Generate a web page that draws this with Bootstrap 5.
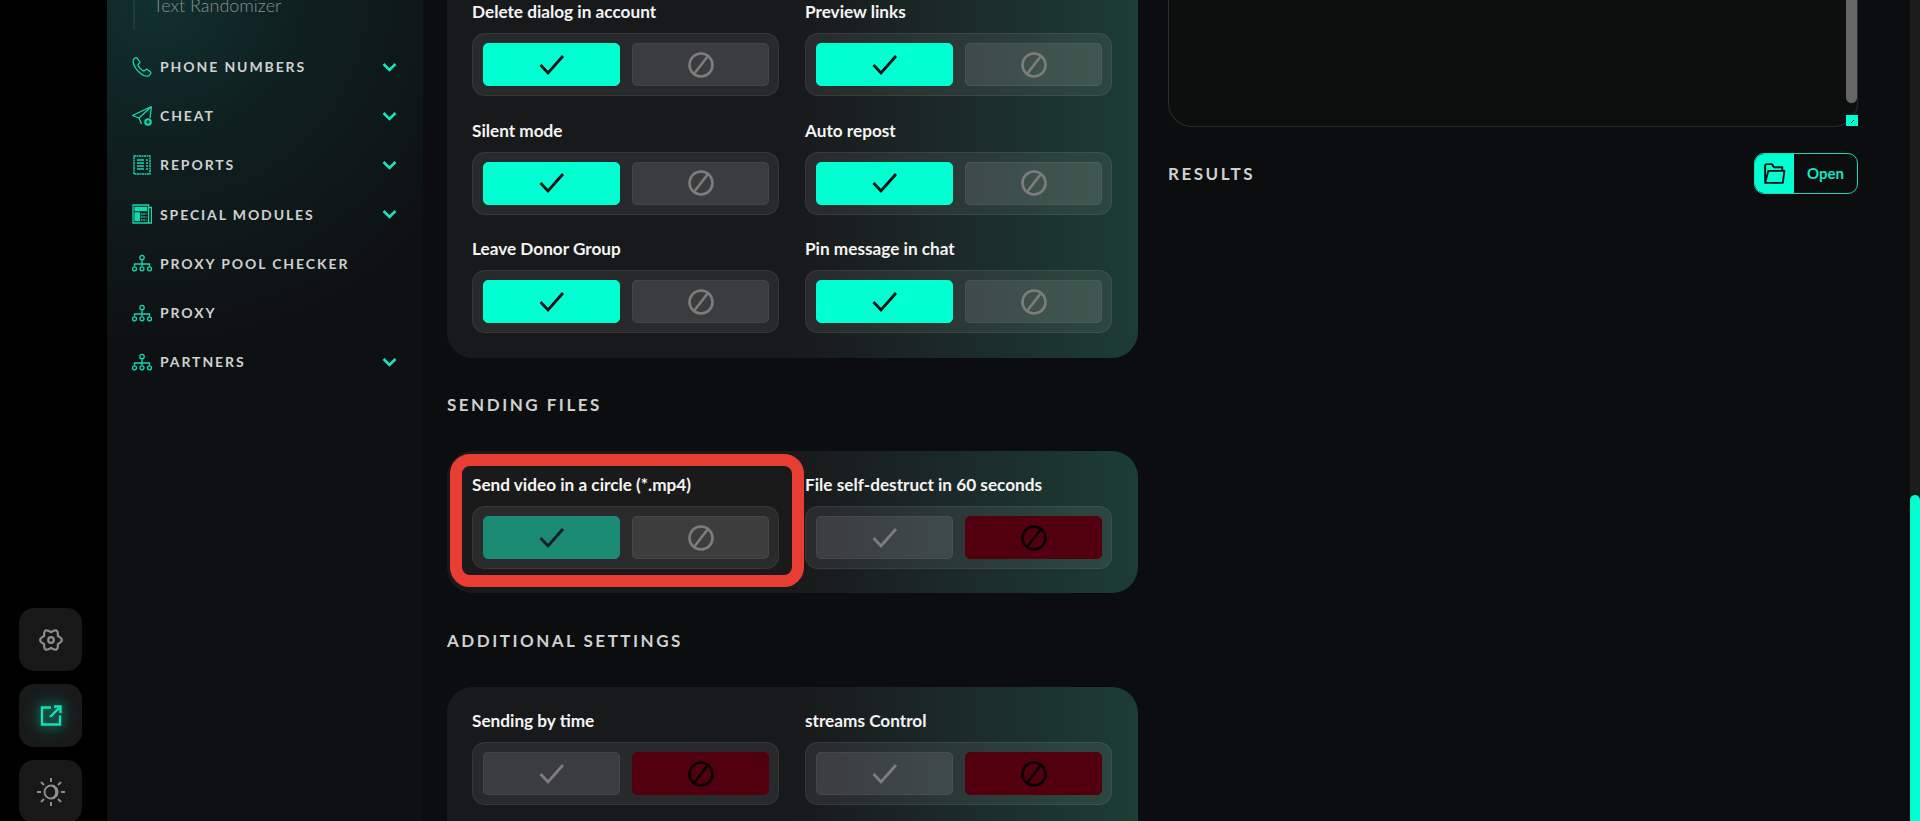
<!DOCTYPE html>
<html lang="en">
<head>
  <meta charset="UTF-8" />
  <title>Settings</title>
  <link href="https://cdn.jsdelivr.net/npm/bootstrap@5.3.0/dist/css/bootstrap.min.css" rel="stylesheet">
  <style>
    html, body { height: 821px; overflow: hidden; }
    body { background: #0c0d0f; font-family: "Lato", "Liberation Sans", sans-serif; color: #f2f2f2; }
    .app-shell { height: 821px; overflow: hidden; }

    .rail { width: 107px; flex: none; background: #000; padding: 0 25px 0 19px; margin-bottom: -2px; gap: 13px; }
    .rail-btn { width: 63px; height: 63px; border-radius: 15px; background: #181818; color: #8d8d8d; flex: none; }
    .rail-btn.is-active { background: radial-gradient(circle, #123a32 0, #181a1a 62%); color: #15e0b8; }
    .rail-btn.is-active svg { filter: drop-shadow(0 0 4px rgba(21, 224, 184, .55)); }

    .side { width: 316px; flex: none; background: radial-gradient(ellipse 360px 340px at 15% 0, #10302e 0, #0f1e1f 45%, #0e1113 100%); background-color: #0e1011; padding: 0 26px 0 25px; }
    .side-sub { height: 30px; margin-left: 1px; margin-bottom: 12px; border-left: 2px solid #1f3a3a; padding-left: 18px; color: #8b9090; font-size: 18px; line-height: 10px; font-weight: 300; white-space: nowrap; }
    .side-item { height: 49.2px; color: #cfd1d1; font-size: 14px; font-weight: 700; letter-spacing: 1.9px; text-transform: uppercase; white-space: nowrap; }
    .side-icon { width: 20px; height: 20px; flex: none; color: #14d9b0; margin-right: 8px; }
    .side-chev { width: 15px; height: 10px; color: #14e8bc; margin-left: auto; flex: none; }

    .main-col { width: 715px; flex: none; padding-left: 24px; }
    .sect-title { color: #cfd1d1; font-size: 17px; font-weight: 700; letter-spacing: 2.5px; text-transform: uppercase; line-height: 20px; }
    .opt-panel { width: 691px; border-radius: 26px; background: linear-gradient(90deg, #18191b 0, #18191b 50%, #1b2b29 75%, #1c3d33 100%); padding: 0 25px; }
    .opt-grid { display: grid; grid-template-columns: 307px 307px; column-gap: 26px; }
    .opt-label { font-size: 17.2px; font-weight: 700; line-height: 20px; color: #f4f4f4; margin-bottom: 11px; white-space: nowrap; }
    .opt-group { height: 63px; border-radius: 13px; padding: 9px 9px 9px 10px; gap: 12px; background: rgba(255, 255, 255, .07); border: 1px solid rgba(255, 255, 255, .07); }
    .opt-btn { flex: 1 1 0; height: 43px; border-radius: 5px; background: rgba(255, 255, 255, .09); border: 1px solid rgba(255, 255, 255, .05); color: #7d7d7d; }
    .opt-btn.is-on { background: #00ffd1; border-color: #00ffd1; color: #0a0f12; }
    .opt-btn.is-off { background: #520010; border-color: #520010; color: #0a0003; }
    .opt-btn.tip-on { background: #1a8a73; border-color: #1a8a73; color: #0f1a22; }
    .opt-btn svg { width: 26px; height: 26px; }

    .panel-a { height: 358px; padding-top: 2px; border-radius: 0 0 26px 26px; }
    .panel-a .opt-grid { row-gap: 24.5px; }
    .panel-b { height: 142px; padding-top: 24px; }
    .panel-c { height: 170px; padding-top: 24px; }
    .title-files { margin-top: 37px; margin-bottom: 36px; }
    .title-extra { margin-top: 38px; margin-bottom: 36px; }

    .tip-box { position: absolute; z-index: 2; left: 3px; top: 3px; width: 354px; height: 133px; border: 12px solid #e83d33; border-radius: 20px; background: #1a1a1a; padding: 9px 0 0 10px; }
    .tip-box .opt-group { width: 307px; }

    .result-col { width: 690px; flex: none; margin-left: 30px; }
    .log-box { height: 127px; border: 1px solid #2a2d2c; border-top: 0; border-radius: 0 0 24px 24px; background: #0d0f0e; }
    .log-thumb { position: absolute; right: 0; top: 0; width: 11px; height: 103px; background: #666; border-radius: 0 0 6px 6px; }
    .log-grip { position: absolute; right: -1px; bottom: 0; width: 12px; height: 11px; background: #00ffd1; }
    .log-grip svg { display: block; }
    .result-head { margin-top: 26px; }
    .open-btn { width: 104px; height: 41px; border-radius: 10px; border: 1px solid #15d9b4; color: #18e6bf; font-size: 15px; font-weight: 700; overflow: hidden; padding: 0; background: transparent; }
    .open-ico { width: 39px; background: #00ffd1; color: #0a0f12; }

    .page-bar { position: absolute; right: 0; top: 0; bottom: 0; width: 10px; background: #1c1c1c; }
    .page-thumb { position: absolute; right: 0; top: 495px; bottom: 0; width: 10px; background: #00ffd1; border-radius: 5px 5px 0 0; }
  </style>
</head>
<body>
  <div class="app-shell d-flex position-relative">

    <div class="rail d-flex flex-column justify-content-end">
      <div class="rail-btn d-flex align-items-center justify-content-center">
        <svg width="28" height="28" viewBox="-2 -2 30 30" fill="none" stroke="currentColor" stroke-width="2.4" stroke-linejoin="round"><path d="M13 4.500Q21 -.86 20.360 8.750Q29 13 20.360 17.250Q21 26.860 13 21.500Q5 26.860 5.640 17.250Q-3 13 5.640 8.750Q5 -.86 13 4.500z"/><circle cx="13" cy="13" r="3"/></svg>
      </div>
      <div class="rail-btn is-active d-flex align-items-center justify-content-center">
        <svg width="24" height="24" viewBox="0 0 24 24" fill="none" stroke="currentColor" stroke-width="2.4"><path d="M12 3.500H3v17h18v-9"/><path d="M11 13l9-9M15 2.500h6.500V9"/></svg>
      </div>
      <div class="rail-btn d-flex align-items-center justify-content-center">
        <svg width="28" height="28" viewBox="0 0 28 28" fill="none" stroke="currentColor" stroke-width="2"><circle cx="14" cy="14" r="6.500"/><path d="M14 0v4M14 24v4M0 14h4M24 14h4M4 4l3 3M21 21l3 3M4 24l3-3M21 7l3-3"/><path d="M15 7.600a6.500 6.500 0 0 1 0 12.800 7 7 0 0 0 0-12.800z" fill="currentColor"/></svg>
      </div>
    </div>

    <div class="side">
      <div class="side-sub">Text Randomizer</div>
      <div class="side-item d-flex align-items-center">
        <svg class="side-icon" viewBox="0 0 20 20" fill="none" stroke="currentColor" stroke-width="1.3" stroke-linejoin="round"><path d="M1.500 2.500C2.500.8 4.500.3 5.300 1.300L7.800 5c.4 1-1.800 2-1.800 3 .6 2.200 3.800 5.500 6 6 1 .1 1.800-2 2.900-1.800l3.500 2.500c1 1-.4 4.300-3 4.500C8.500 19.500-.3 8.500 1.500 2.500z"/></svg>
        Phone numbers
        <svg class="side-chev" viewBox="0 0 15 10" fill="none" stroke="currentColor" stroke-width="2.5"><path d="M1.500 2l6 6 6-6"/></svg>
      </div>
      <div class="side-item d-flex align-items-center">
        <svg class="side-icon" viewBox="0 0 20 20" fill="none" stroke="currentColor" stroke-width="1.3" stroke-linejoin="round"><path d="M19.500 .5L.5 9.500l6.500 2.500 2.500 6M19.500 .5L7 12M19.500 .5L18 12"/><circle cx="16" cy="16" r="3.800" fill="currentColor" stroke="none"/><path d="M16 14v4M14 16h4" stroke="#0e1c1e" stroke-width="1.2"/></svg>
        Cheat
        <svg class="side-chev" viewBox="0 0 15 10" fill="none" stroke="currentColor" stroke-width="2.5"><path d="M1.500 2l6 6 6-6"/></svg>
      </div>
      <div class="side-item d-flex align-items-center">
        <svg class="side-icon" viewBox="0 0 20 20" fill="none" stroke="currentColor" stroke-width="1.4"><path d="M2 1h16v18H2z" stroke-dasharray="2 .5"/><path d="M5 5h7M5 8h7M5 11h7M5 14h7M14 5h2M14 8h2M14 11h2M14 14h2" stroke-width="1.5"/></svg>
        Reports
        <svg class="side-chev" viewBox="0 0 15 10" fill="none" stroke="currentColor" stroke-width="2.5"><path d="M1.500 2l6 6 6-6"/></svg>
      </div>
      <div class="side-item d-flex align-items-center">
        <svg class="side-icon" viewBox="0 0 20 20" fill="none" stroke="currentColor" stroke-width="1.3"><path d="M1 1h15.500v18H1zM16.500 3.500h3V19h-3"/><path d="M3 3.500h11.500v3H3z" fill="currentColor"/><path d="M3 9h4.500v7.500H3z" fill="currentColor"/><path d="M9 10h5.500M9 13h5.500M9 16h5.500" stroke-dasharray="1.500 .8"/></svg>
        Special modules
        <svg class="side-chev" viewBox="0 0 15 10" fill="none" stroke="currentColor" stroke-width="2.5"><path d="M1.500 2l6 6 6-6"/></svg>
      </div>
      <div class="side-item d-flex align-items-center">
        <svg class="side-icon" viewBox="0 0 20 20" fill="none" stroke="currentColor" stroke-width="1.3"><circle cx="10" cy="4.500" r="2.200"/><path d="M10 6.700V11M2.500 13.500V11h15v2.500M10 11v2.500"/><circle cx="2.500" cy="15.800" r="2"/><circle cx="10" cy="15.800" r="2"/><circle cx="17.500" cy="15.800" r="2"/></svg>
        Proxy pool checker
      </div>
      <div class="side-item d-flex align-items-center">
        <svg class="side-icon" viewBox="0 0 20 20" fill="none" stroke="currentColor" stroke-width="1.3"><circle cx="10" cy="4.500" r="2.200"/><path d="M10 6.700V11M2.500 13.500V11h15v2.500M10 11v2.500"/><circle cx="2.500" cy="15.800" r="2"/><circle cx="10" cy="15.800" r="2"/><circle cx="17.500" cy="15.800" r="2"/></svg>
        Proxy
      </div>
      <div class="side-item d-flex align-items-center">
        <svg class="side-icon" viewBox="0 0 20 20" fill="none" stroke="currentColor" stroke-width="1.3"><circle cx="10" cy="4.500" r="2.200"/><path d="M10 6.700V11M2.500 13.500V11h15v2.500M10 11v2.500"/><circle cx="2.500" cy="15.800" r="2"/><circle cx="10" cy="15.800" r="2"/><circle cx="17.500" cy="15.800" r="2"/></svg>
        Partners
        <svg class="side-chev" viewBox="0 0 15 10" fill="none" stroke="currentColor" stroke-width="2.5"><path d="M1.500 2l6 6 6-6"/></svg>
      </div>
    </div>

    <div class="main-col" id="mainCol"></div>

    <div class="result-col">
      <div class="log-box position-relative">
        <div class="log-thumb"></div>
        <div class="log-grip">
          <svg width="12" height="11" viewBox="0 0 12 11" fill="none" stroke="#0c3a34" stroke-width="1"><path d="M5 8l3-3"/></svg>
        </div>
      </div>
      <div class="result-head d-flex align-items-center justify-content-between">
        <div class="sect-title">Results</div>
        <button class="open-btn d-flex align-items-stretch" type="button">
          <span class="open-ico d-flex align-items-center justify-content-center">
            <svg width="25" height="25" viewBox="0 0 24 24" fill="none" stroke="currentColor" stroke-width="1.8" stroke-linejoin="round"><path d="M3 20V4.500A1.500 1.500 0 0 1 4.500 3h5l2 3h8V9"/><path d="M6 9.500h15.500L20 21H3z"/></svg>
          </span>
          <span class="flex-grow-1 align-self-center text-center">Open</span>
        </button>
      </div>
    </div>

    <div class="page-bar"><div class="page-thumb"></div></div>
  </div>

  <script>
    const CHECK = '<svg viewBox="0 0 26 26" fill="none" stroke="currentColor" stroke-width="2.8"><path d="M1.500 13l7.500 8L24 4"/></svg>';
    const BAN = '<svg viewBox="0 0 26 26" fill="none" stroke="currentColor" stroke-width="2.6"><circle cx="13" cy="13" r="11.500"/><path d="M20 4L6 22"/></svg>';

    function renderOpt(label, on) {
      return `<div>
        <div class="opt-label">${label}</div>
        <div class="opt-group d-flex">
          <div class="opt-btn d-flex align-items-center justify-content-center ${on ? 'is-on' : ''}">${CHECK}</div>
          <div class="opt-btn d-flex align-items-center justify-content-center ${on ? '' : 'is-off'}">${BAN}</div>
        </div>
      </div>`;
    }

    const col = document.getElementById('mainCol');
    col.innerHTML = `
      <div class="opt-panel panel-a">
        <div class="opt-grid">
          ${renderOpt('Delete dialog in account', true)}
          ${renderOpt('Preview links', true)}
          ${renderOpt('Silent mode', true)}
          ${renderOpt('Auto repost', true)}
          ${renderOpt('Leave Donor Group', true)}
          ${renderOpt('Pin message in chat', true)}
        </div>
      </div>
      <div class="sect-title title-files">Sending files</div>
      <div class="opt-panel panel-b position-relative">
        <div class="opt-grid">
          ${renderOpt('Send video in a circle (*.mp4)', true)}
          ${renderOpt('File self-destruct in 60 seconds', false)}
        </div>
        <div class="tip-box">
          <div class="opt-label">Send video in a circle (*.mp4)</div>
          <div class="opt-group d-flex">
            <div class="opt-btn tip-on d-flex align-items-center justify-content-center">${CHECK}</div>
            <div class="opt-btn d-flex align-items-center justify-content-center">${BAN}</div>
          </div>
        </div>
      </div>
      <div class="sect-title title-extra">Additional settings</div>
      <div class="opt-panel panel-c">
        <div class="opt-grid">
          ${renderOpt('Sending by time', false)}
          ${renderOpt('streams Control', false)}
        </div>
      </div>`;
  </script>
</body>
</html>
